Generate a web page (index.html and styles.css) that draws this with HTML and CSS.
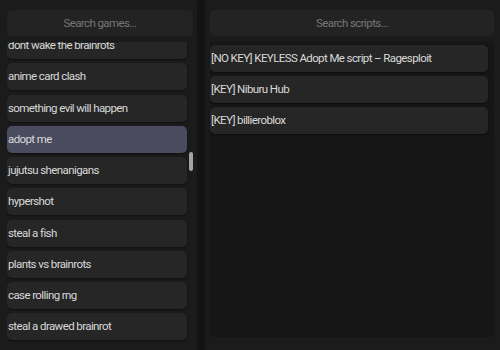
FILE: index.html
```html
<!DOCTYPE html>
<html lang="en">
<head>
  <meta charset="UTF-8" />
  <title>Script Hub</title>
  <link rel="stylesheet" href="styles.css">
</head>
<body>
  <div class="app">
    <!-- games column -->
    <section class="panel games">
      <input class="search" type="text" placeholder="Search games...">
      <div class="list-wrap">
        <ul class="list game-list">
          <li class="item">dont wake the brainrots</li>
          <li class="item">anime card clash</li>
          <li class="item">something evil will happen</li>
          <li class="item active">adopt me</li>
          <li class="item">jujutsu shenanigans</li>
          <li class="item">hypershot</li>
          <li class="item">steal a fish</li>
          <li class="item">plants vs brainrots</li>
          <li class="item">case rolling rng</li>
          <li class="item">steal a drawed brainrot</li>
        </ul>
        <div class="scrollbar"><div class="thumb"></div></div>
      </div>
    </section>

    <!-- scripts column -->
    <section class="panel scripts">
      <input class="search" type="text" placeholder="Search scripts...">
      <div class="script-box">
        <ul class="list script-list">
          <li class="item">[NO KEY] KEYLESS Adopt Me script – Ragesploit</li>
          <li class="item">[KEY] Niburu Hub</li>
          <li class="item">[KEY] billieroblox</li>
        </ul>
      </div>
    </section>
  </div>
</body>
</html>
```
FILE: styles.css
```css
/* ---------- base ---------- */
body {
  margin: 0;
  padding: 0;
  background: #131313;
  font-family: Roboto, "Liberation Sans", Arial, sans-serif;
  font-size: 11.5px;
  letter-spacing: -0.6px;
  color: #d9d9d9;
}
.app {
  display: flex;
  height: 350px;
  overflow: hidden;
}
.panel {
  box-sizing: border-box;
  background: #1b1b1b;
  display: flex;
  flex-direction: column;
}
.search {
  box-sizing: border-box;
  width: 100%;
  height: 26px;
  flex: none;
  border: none;
  outline: none;
  border-radius: 5px;
  background: #232323;
  color: #d9d9d9;
  text-align: center;
  font-family: inherit;
  font-size: 11.5px;
  letter-spacing: -0.6px;
}
.search::placeholder {
  color: #767676;
}
/* ----- lists ----- */
.list {
  list-style: none;
  margin: 0;
  padding: 0;
  display: flex;
  flex-direction: column;
  gap: 4.25px;
}
.item {
  flex: none;
  height: 27px;
  line-height: 27px;
  padding-left: 1px;
  border-radius: 5px;
  background: #262626;
  box-shadow: 0 1px 2px rgba(0, 0, 0, 0.45);
  white-space: nowrap;
  overflow: hidden;
}
.item.active {
  background: #4b4b5f;
}
/* ----- games column ----- */
.games {
  width: 197px;
  padding: 10px 4px 7px 7px;
  gap: 6px;
}
.list-wrap {
  flex: 1;
  display: flex;
  gap: 2px;
  overflow: hidden;
}
.game-list {
  flex: 1;
  margin-top: -10px;
}
.scrollbar {
  width: 4px;
}
.thumb {
  margin-top: 110px;
  height: 19px;
  border-radius: 2px;
  background: #a3a3a3;
}
/* ----- scripts column ----- */
.scripts {
  flex: 1;
  margin-left: 8px;
  padding: 10px 6px 13px 5px;
  gap: 5px;
}
.script-box {
  flex: 1;
  background: #161616;
  border-radius: 3px;
  padding: 4px 6px 0 0;
}
.script-list {
  gap: 4px;
}
```
